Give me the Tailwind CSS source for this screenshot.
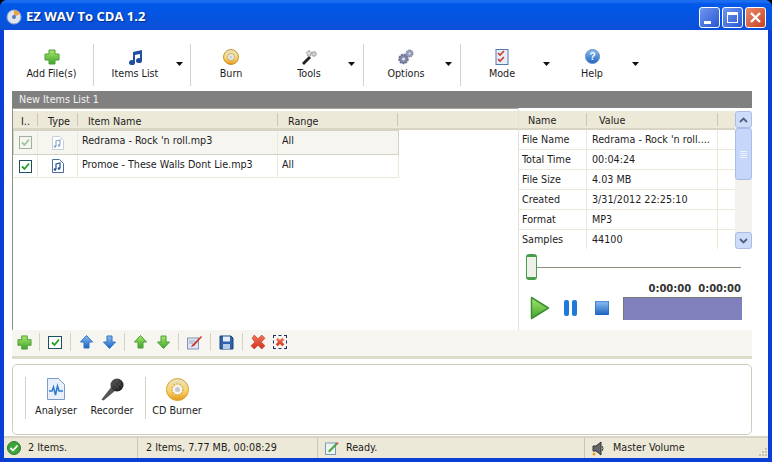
<!DOCTYPE html>
<html lang="en">
<head>
<meta charset="UTF-8">
<title>EZ WAV To CDA 1.2</title>
<script src="https://cdn.jsdelivr.net/npm/@tailwindcss/browser@4"></script>
</head>
<body class="bg-black overflow-hidden">
<svg width="0" height="0" class="absolute">
  <defs>
    <linearGradient id="gGreen" x1="0" y1="0" x2="0" y2="1"><stop offset="0" stop-color="#a6e86a"/><stop offset="1" stop-color="#3fa52c"/></linearGradient>
    <linearGradient id="gBlue" x1="0" y1="0" x2="0" y2="1"><stop offset="0" stop-color="#8cc0f0"/><stop offset="1" stop-color="#1b62c0"/></linearGradient>
    <linearGradient id="gRed" x1="0" y1="0" x2="0" y2="1"><stop offset="0" stop-color="#f2765a"/><stop offset="1" stop-color="#d2301c"/></linearGradient>
    <linearGradient id="gDisc" x1="0" y1="0" x2="0" y2="1"><stop offset="0" stop-color="#e8e2c8"/><stop offset="0.55" stop-color="#f6d770"/><stop offset="1" stop-color="#e8961a"/></linearGradient>
    <linearGradient id="gMic" x1="0" y1="0" x2="1" y2="1"><stop offset="0" stop-color="#5a5a5a"/><stop offset="1" stop-color="#111"/></linearGradient>
  </defs>
</svg>

<div class="w-[772px] h-[462px] flex flex-col font-['DejaVu_Sans_Condensed','DejaVu_Sans',sans-serif] text-[10.7px] text-[#1c1c1c] bg-[#0a3fd6] rounded-t-[7px] overflow-hidden">

  <!-- title bar -->
  <div class="h-[30px] shrink-0 flex items-center pt-[4px] pl-[6px] pr-[6px] bg-linear-to-b from-[#1a6cf0] from-5% via-[#0058e8] via-15% to-[#0a50d8]">
    <svg width="16" height="16" viewBox="0 0 16 16"><circle cx="8" cy="8" r="7" fill="#dfe6f2" stroke="#8fa6cc"/><path d="M8 1a7 7 0 0 1 6 4L8 8z" fill="#e8a24c"/><circle cx="8" cy="8" r="2" fill="#5a7ab8"/></svg>
    <span class="ml-[4px] font-['Open_Sans',sans-serif] font-bold text-[13px] text-white [text-shadow:1px_1px_1px_#0a2a80]">EZ WAV To CDA 1.2</span>
    <div class="ml-auto flex gap-[2px]">
      <div class="w-[21px] h-[21px] rounded-[3px] border border-white bg-linear-to-br from-[#6f97ee] to-[#2a56d2] flex items-end pl-[4px] pb-[3px]"><div class="w-[7px] h-[3px] bg-white"></div></div>
      <div class="w-[21px] h-[21px] rounded-[3px] border border-white bg-linear-to-br from-[#6f97ee] to-[#2a56d2] flex items-center justify-center"><div class="w-[11px] h-[11px] border border-t-[3px] border-white"></div></div>
      <div class="w-[21px] h-[21px] rounded-[3px] border border-white bg-linear-to-br from-[#e88a6c] to-[#c5401f] flex items-center justify-center">
        <svg width="13" height="13" viewBox="0 0 13 13"><path d="M2 2l9 9M11 2l-9 9" stroke="#fff" stroke-width="2.4"/></svg>
      </div>
    </div>
  </div>

  <!-- window body -->
  <div class="flex-1 min-h-0 mx-[4px] mb-[4px] bg-white flex flex-col">

    <!-- main toolbar -->
    <div class="h-[61px] shrink-0 flex items-center pt-[8px] pl-[9px]">
      <div class="w-[77px] flex flex-col items-center">
        <svg width="16" height="16" viewBox="0 0 16 16"><path d="M5 1h6v4h4v6h-4v4H5v-4H1V5h4z" fill="url(#gGreen)" stroke="#4f9e36"/></svg>
        <span class="mt-[2px] leading-[14px]">Add File(s)</span>
      </div>
      <div class="w-px h-[42px] bg-[#d5d2c6] ml-[3px]"></div>
      <div class="w-[82px] flex flex-col items-center">
        <svg width="17" height="17" viewBox="0 0 17 17"><path d="M6 3l9-2v10.500a3 2.500 0 1 1-2-2.300V5L8 6v7.500a3 2.500 0 1 1-2-2.300z" fill="#1f4f9e"/></svg>
        <span class="mt-[1px] leading-[14px]">Items List</span>
      </div>
      <svg class="-mt-[2px] w-[7px] h-[4px]" viewBox="0 0 7 4"><path d="M0 0h7L3.500 4z" fill="#111"/></svg>
      <div class="w-px h-[42px] bg-[#d5d2c6] ml-[7px]"></div>
      <div class="w-[80px] flex flex-col items-center">
        <svg width="16" height="16" viewBox="0 0 16 16"><circle cx="8" cy="8" r="7.500" fill="url(#gDisc)" stroke="#c9962e"/><circle cx="8" cy="8" r="3.500" fill="#eee" stroke="#c8b070"/><circle cx="8" cy="8" r="1.500" fill="#ccc"/></svg>
        <span class="mt-[2px] leading-[14px]">Burn</span>
      </div>
      <div class="w-[76px] flex flex-col items-center">
        <svg width="16" height="16" viewBox="0 0 16 16"><path d="M1 14l7-7 2 2-7 7z" fill="#222"/><path d="M8 1l1 2 2 .5-1.500 1.500.3 2-1.800-1-1.800 1 .3-2L5 3.500 7 3z" fill="#ddd" stroke="#888" stroke-width=".6"/><circle cx="13" cy="5" r="2.400" fill="#ccc" stroke="#888" stroke-width=".6"/></svg>
        <span class="mt-[2px] leading-[14px]">Tools</span>
      </div>
      <svg class="-mt-[2px] ml-[1px] w-[7px] h-[4px]" viewBox="0 0 7 4"><path d="M0 0h7L3.500 4z" fill="#111"/></svg>
      <div class="w-px h-[42px] bg-[#d5d2c6] ml-[8px]"></div>
      <div class="w-[84px] flex flex-col items-center">
        <svg width="16" height="16" viewBox="0 0 16 16"><circle cx="5.500" cy="10" r="4.500" fill="#8088a8" stroke="#666d8c" stroke-width="1.500" stroke-dasharray="2 1"/><circle cx="5.500" cy="10" r="1.500" fill="#e4e4ee"/><circle cx="11.500" cy="4.500" r="3.500" fill="#9aa0bc" stroke="#70769a" stroke-dasharray="1.600 .8"/><circle cx="11.500" cy="4.500" r="1" fill="#e4e4ee"/></svg>
        <span class="mt-[2px] leading-[14px]">Options</span>
      </div>
      <svg class="-mt-[2px] -ml-[3px] w-[7px] h-[4px]" viewBox="0 0 7 4"><path d="M0 0h7L3.500 4z" fill="#111"/></svg>
      <div class="w-px h-[42px] bg-[#d5d2c6] ml-[8px]"></div>
      <div class="w-[82px] flex flex-col items-center">
        <svg width="14" height="16" viewBox="0 0 14 16"><rect x="1" y=".5" width="12" height="15" fill="#e8eef8" stroke="#5577aa"/><path d="M3 4l2 2 4-4M3 10l2 2 4-4" fill="none" stroke="#c93a2e" stroke-width="1.600"/></svg>
        <span class="mt-[2px] leading-[14px]">Mode</span>
      </div>
      <svg class="-mt-[2px] w-[7px] h-[4px]" viewBox="0 0 7 4"><path d="M0 0h7L3.500 4z" fill="#111"/></svg>
      <div class="w-[82px] ml-[1px] flex flex-col items-center">
        <svg width="15" height="15" viewBox="0 0 15 15"><circle cx="7.500" cy="7.500" r="7" fill="url(#gBlue)" stroke="#6a8fc0"/><text x="7.500" y="11" text-anchor="middle" font-size="10" font-weight="bold" fill="#fff" font-family="Liberation Sans">?</text></svg>
        <span class="mt-[3px] leading-[14px]">Help</span>
      </div>
      <svg class="-mt-[2px] -ml-[1px] w-[7px] h-[4px]" viewBox="0 0 7 4"><path d="M0 0h7L3.500 4z" fill="#111"/></svg>
    </div>

    <!-- list title -->
    <div class="h-[17px] shrink-0 ml-[8px] mr-[16px] bg-[#808080] text-[#f2f2f2] pl-[7px] leading-[17px]">New Items List 1</div>

    <!-- lists -->
    <div class="h-[222px] shrink-0 ml-[8px] mr-[16px] flex border-l border-[#8f8f88]">
      <div class="w-[506px] flex flex-col border-r border-[#e4e2d8]">
        <div class="h-[3px] bg-white border-t border-[#aca899]"></div>
        <div class="h-[19px] flex items-center bg-[#ece9d8] border-b-2 border-[#d9d5c4]">
          <div class="w-[25px] h-[13px] border-r border-[#c9c6b6] pl-[8px] leading-[17px]">I..</div>
          <div class="w-[40px] h-[13px] border-r border-[#c9c6b6] pl-[10px] leading-[17px]">Type</div>
          <div class="w-[200px] h-[13px] border-r border-[#c9c6b6] pl-[10px] leading-[17px]">Item Name</div>
          <div class="w-[120px] h-[13px] border-r border-[#c9c6b6] pl-[10px] leading-[17px]">Range</div>
        </div>
        <div class="h-[25px] w-[386px] flex bg-[#f6f5f0] border border-[#d3d0c4]">
          <div class="w-[24px] flex items-center justify-center border-r border-[#ece9d8]"><div class="w-[13px] h-[13px] border border-[#9fb0a0] flex items-center justify-center"><svg width="9" height="9" viewBox="0 0 9 9"><path d="M1 4.500l2.500 2.500L8 1.500" fill="none" stroke="#9cc79c" stroke-width="1.800"/></svg></div></div>
          <div class="w-[40px] flex items-center justify-center border-r border-[#ece9d8]">
            <svg width="12" height="14" viewBox="0 0 12 14"><path d="M.5.500h7l4 4v9H.500z" fill="#fff" stroke="#c3cfdf"/><path d="M4 10V5l4-1v5" fill="none" stroke="#90a8c8" stroke-width="1.200"/><circle cx="3" cy="10.500" r="1.300" fill="#90a8c8"/><circle cx="7" cy="9.500" r="1.300" fill="#90a8c8"/></svg>
          </div>
          <div class="w-[200px] pl-[4px] pt-[2px] border-r border-[#ece9d8]">Redrama - Rock 'n roll.mp3</div>
          <div class="pl-[4px] pt-[2px]">All</div>
        </div>
        <div class="h-[23px] w-[386px] flex border-b border-r border-[#ece9d8]">
          <div class="w-[25px] flex items-center justify-center border-r border-[#ece9d8]"><div class="w-[13px] h-[13px] border border-[#1c5160] flex items-center justify-center"><svg width="9" height="9" viewBox="0 0 9 9"><path d="M1 4.500l2.500 2.500L8 1.500" fill="none" stroke="#21a121" stroke-width="1.800"/></svg></div></div>
          <div class="w-[40px] flex items-center justify-center border-r border-[#ece9d8]">
            <svg width="12" height="14" viewBox="0 0 12 14"><path d="M.5.500h7l4 4v9H.500z" fill="#fff" stroke="#4a6d9c"/><path d="M4 10V5l4-1v5" fill="none" stroke="#1f4f8e" stroke-width="1.200"/><circle cx="3" cy="10.500" r="1.300" fill="#1f4f8e"/><circle cx="7" cy="9.500" r="1.300" fill="#1f4f8e"/></svg>
          </div>
          <div class="w-[200px] pl-[4px] pt-[2px] border-r border-[#ece9d8]">Promoe - These Walls Dont Lie.mp3</div>
          <div class="pl-[4px] pt-[2px]">All</div>
        </div>
      </div>

      <div class="flex-1 flex flex-col min-w-0">
        <div class="flex flex-1 min-h-0 pt-[3px]">
          <div class="w-[216px] flex flex-col">
            <div class="h-[19px] flex items-center bg-[#ece9d8] border-b-2 border-[#d9d5c4]">
              <div class="w-[68px] h-[13px] border-r border-[#c9c6b6] pl-[9px] leading-[15px]">Name</div>
              <div class="w-[131px] h-[13px] border-r border-[#c9c6b6] pl-[12px] leading-[15px]">Value</div>
            </div>
            <div class="h-[20px] flex border-b border-[#ece9d8]"><div class="w-[68px] pl-[3px] border-r border-[#ece9d8] leading-[19px]">File Name</div><div class="w-[131px] pl-[5px] border-r border-[#ece9d8] leading-[19px]">Redrama - Rock 'n roll....</div></div>
            <div class="h-[20px] flex border-b border-[#ece9d8]"><div class="w-[68px] pl-[3px] border-r border-[#ece9d8] leading-[19px]">Total Time</div><div class="w-[131px] pl-[5px] border-r border-[#ece9d8] leading-[19px]">00:04:24</div></div>
            <div class="h-[20px] flex border-b border-[#ece9d8]"><div class="w-[68px] pl-[3px] border-r border-[#ece9d8] leading-[19px]">File Size</div><div class="w-[131px] pl-[5px] border-r border-[#ece9d8] leading-[19px]">4.03 MB</div></div>
            <div class="h-[20px] flex border-b border-[#ece9d8]"><div class="w-[68px] pl-[3px] border-r border-[#ece9d8] leading-[19px]">Created</div><div class="w-[131px] pl-[5px] border-r border-[#ece9d8] leading-[19px]">3/31/2012 22:25:10</div></div>
            <div class="h-[20px] flex border-b border-[#ece9d8]"><div class="w-[68px] pl-[3px] border-r border-[#ece9d8] leading-[19px]">Format</div><div class="w-[131px] pl-[5px] border-r border-[#ece9d8] leading-[19px]">MP3</div></div>
            <div class="h-[19px] flex"><div class="w-[68px] pl-[3px] border-r border-[#ece9d8] leading-[19px]">Samples</div><div class="w-[131px] pl-[5px] border-r border-[#ece9d8] leading-[19px]">44100</div></div>
          </div>
          <!-- scrollbar -->
          <div class="w-[17px] h-[138px] bg-[#f3f2ec] flex flex-col">
            <div class="h-[17px] rounded-[3px] border border-[#a9bde8] bg-[#cfdcf8] flex items-center justify-center"><svg width="9" height="6" viewBox="0 0 9 6"><path d="M1 5l3.500-3.500L8 5" fill="none" stroke="#4d6185" stroke-width="1.800"/></svg></div>
            <div class="h-[52px] rounded-[3px] border border-[#a9bde8] bg-[#c5d6fa] flex flex-col items-center justify-center gap-[1px]"><div class="w-[7px] h-px bg-[#eef3ff]"></div><div class="w-[7px] h-px bg-[#eef3ff]"></div><div class="w-[7px] h-px bg-[#eef3ff]"></div><div class="w-[7px] h-px bg-[#eef3ff]"></div></div>
            <div class="flex-1"></div>
            <div class="h-[17px] rounded-[3px] border border-[#a9bde8] bg-[#cfdcf8] flex items-center justify-center"><svg width="9" height="6" viewBox="0 0 9 6"><path d="M1 1l3.500 3.500L8 1" fill="none" stroke="#4d6185" stroke-width="1.800"/></svg></div>
          </div>
        </div>
        <!-- player -->
        <div class="h-[80px] shrink-0 flex flex-col pl-[7px]">
          <div class="h-[26px] mt-[4px] flex items-center relative">
            <div class="w-[211px] h-px bg-[#8d8d80] ml-[4px]"></div>
            <div class="absolute left-0 top-0 w-[11px] h-[26px] rounded-[3px] border-y-[3px] border-x border-[#46a04a] bg-[#f0f0ea]"></div>
          </div>
          <div class="h-[13px] mt-[2px] w-[215px] text-right font-['DejaVu_Sans',sans-serif] font-bold text-[10px] leading-[13px] text-[#333]">0:00:00&nbsp; 0:00:00</div>
          <div class="flex items-center mt-[1px]">
            <svg class="ml-[4px]" width="20" height="24" viewBox="0 0 20 24"><path d="M1.500 1.500l17 10.500-17 10.500z" fill="url(#gGreen)" stroke="#3d8f35" stroke-linejoin="round" stroke-width="1.500"/></svg>
            <svg class="ml-[14px]" width="14" height="16" viewBox="0 0 14 16"><rect x="0" y="0" width="5" height="16" rx="2" fill="#1d7ad6"/><rect x="8" y="0" width="5" height="16" rx="2" fill="#1d7ad6"/></svg>
            <svg class="ml-[17px]" width="14" height="14" viewBox="0 0 14 14"><rect width="14" height="14" rx="2" fill="url(#gBlue)" stroke="#1765c4"/></svg>
            <div class="ml-[14px] w-[119px] h-[23px] bg-[#8080bc] border-l border-t border-[#77776f]"></div>
          </div>
        </div>
      </div>
    </div>

    <!-- bottom toolbar -->
    <div class="h-[26px] shrink-0 ml-[8px] mr-[16px] bg-[#f6f5ef] flex items-center pl-[5px] pb-[2px]">
      <svg width="15" height="15" viewBox="0 0 16 16"><path d="M5 1h6v4h4v6h-4v4H5v-4H1V5h4z" fill="url(#gGreen)" stroke="#4f9e36"/></svg>
      <div class="w-px h-[18px] bg-[#d5d2c6] ml-[7px]"></div>
      <div class="ml-[8px] w-[14px] h-[13px] border border-[#1c5160] bg-white flex items-center justify-center"><svg width="9" height="9" viewBox="0 0 9 9"><path d="M1 4.500l2.500 2.500L8 1.500" fill="none" stroke="#21a121" stroke-width="1.800"/></svg></div>
      <div class="w-px h-[18px] bg-[#d5d2c6] ml-[8px]"></div>
      <svg class="ml-[9px]" width="13" height="14" viewBox="0 0 13 14"><path d="M6.500.500L12.500 7H9v6H4V7H.500z" fill="url(#gBlue)" stroke="#2e72c8"/></svg>
      <svg class="ml-[10px]" width="13" height="14" viewBox="0 0 13 14"><path d="M6.500 13.500L12.500 7H9V1H4v6H.500z" fill="url(#gBlue)" stroke="#2e72c8"/></svg>
      <div class="w-px h-[18px] bg-[#d5d2c6] ml-[8px]"></div>
      <svg class="ml-[9px]" width="13" height="14" viewBox="0 0 13 14"><path d="M6.500.500L12.500 7H9v6H4V7H.500z" fill="url(#gGreen)" stroke="#4f9e36"/></svg>
      <svg class="ml-[10px]" width="13" height="14" viewBox="0 0 13 14"><path d="M6.500 13.500L12.500 7H9V1H4v6H.500z" fill="url(#gGreen)" stroke="#4f9e36"/></svg>
      <div class="w-px h-[18px] bg-[#d5d2c6] ml-[8px]"></div>
      <svg class="ml-[8px]" width="16" height="15" viewBox="0 0 16 15"><rect x=".5" y="3" width="11" height="11" fill="#dfe6f2" stroke="#7f97b8"/><path d="M5 10L14 1l1 1-8 9-3 1z" fill="#c93a2e"/><path d="M2 6h6M2 8h4" stroke="#9ab"/></svg>
      <div class="w-px h-[18px] bg-[#d5d2c6] ml-[7px]"></div>
      <svg class="ml-[8px]" width="15" height="15" viewBox="0 0 15 15"><path d="M1 1h11l2 2v11H1z" fill="#2f62a8" stroke="#1d467e"/><rect x="4" y="1.500" width="7" height="5" fill="#e8eef8"/><rect x="4" y="9" width="7" height="5" fill="#b8cbe4"/></svg>
      <div class="w-px h-[18px] bg-[#d5d2c6] ml-[8px]"></div>
      <svg class="ml-[7px]" width="16" height="16" viewBox="0 0 15 15"><path d="M2 4l2-3 3.500 3.500L11 1l3 3-3.500 3.500L14 11l-3 3-3.500-3.500L4 14l-3-3 3.500-3.500z" fill="url(#gRed)" stroke="#c0301c" stroke-width=".6"/></svg>
      <div class="ml-[7px] w-[14px] h-[14px] border border-dashed border-[#23305f] flex items-center justify-center"><svg width="10" height="10" viewBox="0 0 15 15"><path d="M2 4l2-3 3.500 3.500L11 1l3 3-3.500 3.500L14 11l-3 3-3.500-3.500L4 14l-3-3 3.500-3.500z" fill="url(#gRed)"/></svg></div>
    </div>
    <div class="h-[3px] shrink-0 ml-[8px] mr-[16px] bg-[#dedbcc]"></div>

    <!-- launcher panel -->
    <div class="h-[71px] shrink-0 mt-[5px] ml-[8px] mr-[16px] rounded-[5px] border border-[#cfccbd] flex items-center pl-[12px] pb-[4px]">
      <div class="w-px h-[42px] bg-[#d5d2c6]"></div>
      <div class="w-[56px] ml-[2px] flex flex-col items-center">
        <svg width="18" height="22" viewBox="0 0 18 22"><path d="M.5.500h11l6 6v15H.500z" fill="#e8f0fb" stroke="#7d9cc8"/><path d="M2 13h3l1.500-4 2 8 2-9 1.500 5h4" fill="none" stroke="#2b7ad0" stroke-width="1.500"/></svg>
        <span class="mt-[4px] leading-[14px]">Analyser</span>
      </div>
      <div class="w-[56px] flex flex-col items-center">
        <svg width="23" height="23" viewBox="0 0 23 23"><path d="M0.500 21.500L11 8l4 4L2.500 22.500z" fill="#555"/><circle cx="16" cy="7" r="6.500" fill="url(#gMic)"/><path d="M12 4l6 7M15 2l6 7M11 8l7-6M13 11l7-6" stroke="#666" stroke-width=".5"/></svg>
        <span class="mt-[3px] leading-[14px]">Recorder</span>
      </div>
      <div class="w-px h-[42px] bg-[#d5d2c6] ml-[5px]"></div>
      <div class="w-[62px] flex flex-col items-center">
        <svg width="23" height="23" viewBox="0 0 23 23"><circle cx="11.500" cy="11.500" r="11" fill="url(#gDisc)" stroke="#d9a02c"/><circle cx="11.500" cy="11.500" r="5.500" fill="#f4f4f4" stroke="#e0b040" stroke-width="1.500" stroke-dasharray="2 1"/><circle cx="11.500" cy="11.500" r="2.500" fill="#c8c8c8"/></svg>
        <span class="mt-[3px] leading-[14px]">CD Burner</span>
      </div>
    </div>

    <!-- status bar -->
    <div class="flex-1 min-h-0 mt-px flex items-center bg-[#ece9d8] border-t-2 border-[#d8d5c5]">
      <div class="w-[134px] h-full flex items-center pl-[3px] border-r border-[#c9c6b6]">
        <svg width="14" height="14" viewBox="0 0 14 14"><circle cx="7" cy="7" r="6.500" fill="#3da43a" stroke="#2a7a2a"/><path d="M3.500 7l2.500 2.500 4.500-5" fill="none" stroke="#fff" stroke-width="1.800"/></svg>
        <span class="ml-[7px] pt-px">2 Items.</span>
      </div>
      <div class="w-[180px] h-full flex items-center pl-[8px] pt-px border-r border-[#c9c6b6]">2 Items, 7.77 MB, 00:08:29</div>
      <div class="w-[267px] h-full flex items-center pl-[7px] border-r border-[#c9c6b6]">
        <svg width="14" height="14" viewBox="0 0 14 14"><rect x=".5" y="2" width="10" height="11.500" fill="#eef4ee" stroke="#7f97b8"/><path d="M3 10l8-8 1.500 1.500-8 8z" fill="#49a647"/><path d="M11 2l1-1 1.500 1.500-1 1z" fill="#c93a2e"/></svg>
        <span class="ml-[7px] pt-px">Ready.</span>
      </div>
      <div class="flex-1 h-full flex items-center pl-[6px] relative">
        <svg width="15" height="15" viewBox="0 0 15 15"><path d="M2 5h3l5-4v13l-5-4H2z" fill="#666" stroke="#333"/><path d="M11 5q2 2.500 0 5" fill="none" stroke="#333"/><circle cx="3" cy="13" r="1.500" fill="#e8a020"/></svg>
        <span class="ml-[7px] pt-px">Master Volume</span>
        <svg class="absolute right-0 bottom-0" width="12" height="12" viewBox="0 0 12 12"><path d="M9 2h2v2H9zM6 5h2v2H6zM9 5h2v2H9zM3 8h2v2H3zM6 8h2v2H6zM9 8h2v2H9z" fill="#c5c2b2"/></svg>
      </div>
    </div>
  </div>
</div>
</body>
</html>
